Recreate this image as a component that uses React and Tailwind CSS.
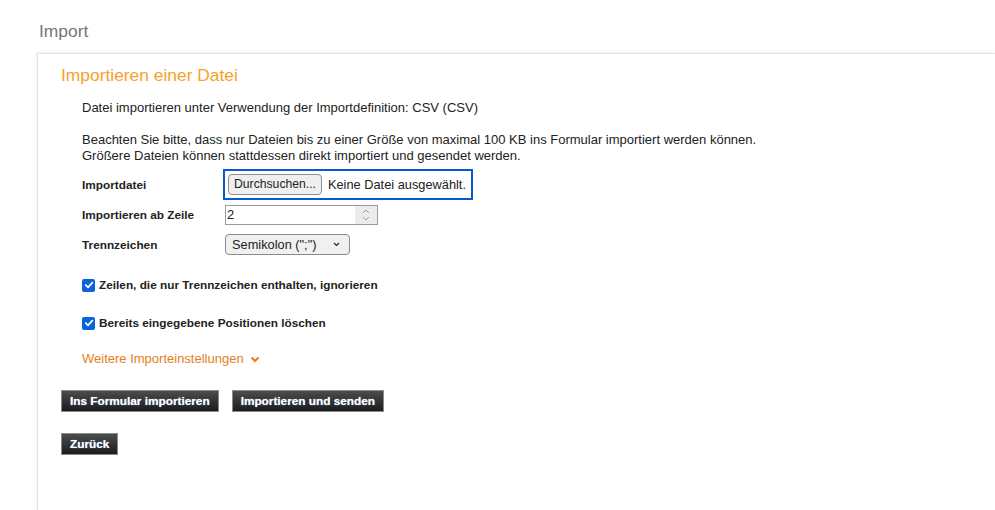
import { useState } from 'react';

function Check({ checked, onChange }) {
  return (
    <button
      type="button"
      onClick={onChange}
      className={`w-[13px] h-[13px] rounded-[2px] flex items-center justify-center shrink-0 ${checked ? 'bg-[#0a63d8]' : 'bg-white border border-[#767676]'}`}
    >
      {checked && (
        <svg width="10" height="10" viewBox="0 0 10 10">
          <path d="M1.8 5.2 L4 7.3 L8.3 2.6" fill="none" stroke="white" strokeWidth="1.8" strokeLinecap="round" strokeLinejoin="round" />
        </svg>
      )}
    </button>
  );
}

function DarkButton({ children }) {
  return (
    <button
      type="button"
      className="h-[22px] px-[8px] border border-[#8a8a8a] bg-gradient-to-b from-[#4d4d4d] to-[#1c1c1c] text-white font-bold text-[11.8px] leading-[20px] [text-shadow:0_0_1px_#9cc3ff]"
    >
      {children}
    </button>
  );
}

export default function App() {
  const [ignoreEmpty, setIgnoreEmpty] = useState(true);
  const [clearPositions, setClearPositions] = useState(true);
  const [startRow, setStartRow] = useState('2');

  return (
    <div className="min-h-[510px] bg-white font-['Liberation_Sans',Arial,sans-serif] text-[#222] overflow-hidden">
      <h1 className="pl-[39px] pt-[21px] h-[53px] text-[17.4px] leading-[20px] text-[#777]">Import</h1>

      <div className="ml-[37px] min-h-[457px] border-l border-t border-[#e4e4e4] shadow-[-1px_-1px_2px_rgba(0,0,0,0.06)] pl-[23px] pt-[11px]">
        <h2 className="text-[17.4px] leading-[20px] text-[#f5a22c]">Importieren einer Datei</h2>

        <div className="pl-[21px] text-[13px] leading-[16px]">
          <p className="mt-[15px]">Datei importieren unter Verwendung der Importdefinition: CSV (CSV)</p>
          <p className="mt-[16px]">
            Beachten Sie bitte, dass nur Dateien bis zu einer Größe von maximal 100 KB ins Formular importiert werden können.
            <br />
            Größere Dateien können stattdessen direkt importiert und gesendet werden.
          </p>

          <div className="mt-[5px] grid grid-cols-[141px_1fr] items-center">
            <span className="font-bold text-[11.8px]">Importdatei</span>
            <div>
              <div className="inline-flex items-center border-2 border-[#0b57d0] p-[3px] pr-[5px] h-[31px]">
                <span className="h-[21px] px-[5px] border border-[#8f8f8f] rounded-[4px] bg-[#efefef] leading-[19px] text-[12.2px]">Durchsuchen...</span>
                <span className="ml-[6px] text-[12.8px]">Keine Datei ausgewählt.</span>
              </div>
            </div>

            <span className="font-bold text-[11.8px] mt-[5px]">Importieren ab Zeile</span>
            <div className="mt-[5px] pl-[2px]">
              <div className="flex w-[153px] h-[20px] border border-[#9a9a9a]">
                <input
                  value={startRow}
                  onChange={(e) => setStartRow(e.target.value)}
                  className="flex-1 min-w-0 px-[1px] text-[13px] outline-none"
                />
                <div className="w-[22px] bg-[#ececec] flex flex-col items-center justify-center gap-[2px]">
                  <svg width="8" height="5" viewBox="0 0 8 5"><path d="M1 4 L4 1 L7 4" fill="none" stroke="#a0a0a0" strokeWidth="1" /></svg>
                  <svg width="8" height="5" viewBox="0 0 8 5"><path d="M1 1 L4 4 L7 1" fill="none" stroke="#a0a0a0" strokeWidth="1" /></svg>
                </div>
              </div>
            </div>

            <span className="font-bold text-[11.8px] mt-[9px]">Trennzeichen</span>
            <div className="mt-[9px] pl-[2px]">
              <div className="flex items-center justify-between w-[125px] h-[21px] border border-[#8a8a8a] rounded-[4px] bg-[#f0f0f0] pl-[6px] pr-[9px] text-[12.8px]">
                <span>Semikolon (";")</span>
                <svg width="7" height="5" viewBox="0 0 7 5"><path d="M1 1 L3.5 3.5 L6 1" fill="none" stroke="#222" strokeWidth="1.2" /></svg>
              </div>
            </div>
          </div>

          <label className="mt-[22px] flex items-center gap-[4px] font-bold text-[11.8px]">
            <Check checked={ignoreEmpty} onChange={() => setIgnoreEmpty(!ignoreEmpty)} />
            Zeilen, die nur Trennzeichen enthalten, ignorieren
          </label>
          <label className="mt-[22px] flex items-center gap-[4px] font-bold text-[11.8px]">
            <Check checked={clearPositions} onChange={() => setClearPositions(!clearPositions)} />
            Bereits eingegebene Positionen löschen
          </label>

          <button type="button" className="mt-[20px] flex items-center gap-[6px] text-[#e5801c] text-[13px] leading-[16px]">
            Weitere Importeinstellungen
            <svg width="10" height="7" viewBox="0 0 10 7"><path d="M1.5 1.5 L5 5 L8.5 1.5" fill="none" stroke="#e5801c" strokeWidth="2.2" /></svg>
          </button>
        </div>

        <div className="mt-[23px] flex gap-[13px]">
          <DarkButton>Ins Formular importieren</DarkButton>
          <DarkButton>Importieren und senden</DarkButton>
        </div>
        <div className="mt-[21px] flex">
          <DarkButton>Zurück</DarkButton>
        </div>
      </div>
    </div>
  );
}
